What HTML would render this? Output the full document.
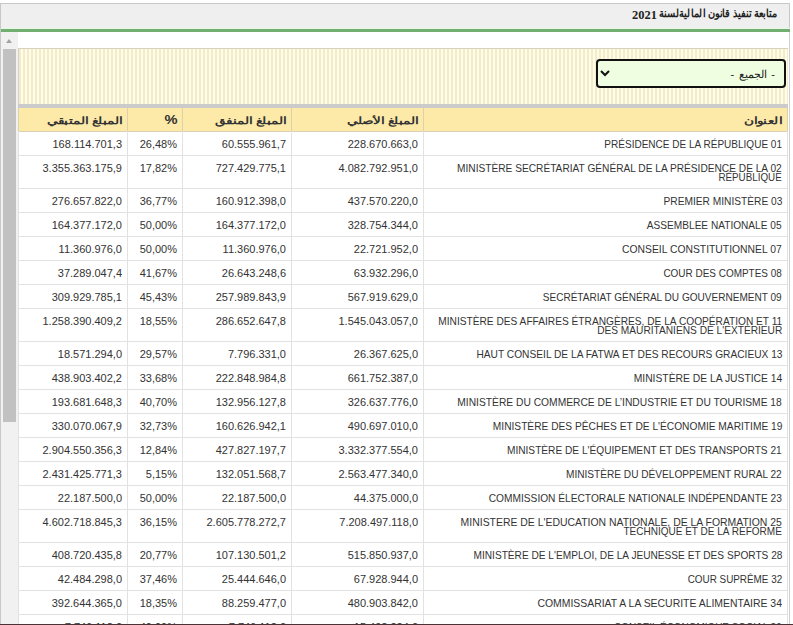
<!DOCTYPE html><html><head><meta charset="utf-8"><style>
*{margin:0;padding:0;box-sizing:border-box}
html,body{width:793px;height:625px;overflow:hidden;background:#fff}
body{position:relative;font-family:"Liberation Sans",sans-serif;color:#333;font-size:11px}
.a{position:absolute}
#frame{left:0;top:3px;width:790px;height:622px;border:1px solid #c8c8c8;border-bottom:none}
#title{left:1px;top:4px;width:788px;height:25px;background:#efefef}
#green{left:1px;top:29px;width:789px;height:3px;background:#72ad72;box-shadow:0 -1px 0 #e4f9e2}
#ttext{right:16px;top:8px;font-weight:bold;font-size:12px;color:#222;direction:rtl;white-space:nowrap;line-height:12px}
#ttext .ar{display:inline-block;transform:scale(0.80,0.9);transform-origin:100% 40%}
#tyear{left:632px;top:7px;font-family:"Liberation Serif",serif;font-weight:bold;font-size:13.5px;line-height:15px;color:#222;transform:scaleX(0.92);transform-origin:0 50%}
.nm{position:absolute;right:5px;top:0;display:block;text-align:right}
.ln{transform-origin:100% 50%;white-space:nowrap}
.hs{display:inline-block;transform:translateY(1.5px) scale(1.09,0.8);transform-origin:100% 60%}
.hp{display:inline-block;transform:translate(0.8px,1px) scale(1.22,1);transform-origin:100% 60%}
#track{left:1px;top:32px;width:17px;height:593px;background:#f1f1f1}
#thumb{left:3px;top:49px;width:13px;height:373px;background:#c1c1c1}
#arrow{left:6px;top:39px;width:0;height:0;border-left:3.5px solid transparent;border-right:3.5px solid transparent;border-bottom:4px solid #a3a3a3}
#panel{left:18px;top:48px;width:770px;height:56px;border:1px solid #d6d0bd;border-right:none;border-bottom:none;
 background:repeating-linear-gradient(90deg,#f2ebcf 0,#f2ebcf 2px,#fffee2 2px,#fffee2 4px)}
#sel{left:596px;top:59px;width:190px;height:29px;border:2px solid #111;border-radius:4px;background:#effde0}
#seltext{right:9px;top:7px;font-size:11px;word-spacing:1.5px;color:#222;direction:rtl;white-space:nowrap;line-height:12px}
#gray{left:18px;top:104px;width:770px;height:4px;background:#cbcbcb}
#hdr{left:18px;top:108px;width:770px;height:24px;background:#fdeaa9;border-bottom:1px solid #d9d0b5}
.h{position:absolute;top:108px;height:23px;font-weight:bold;color:#333;text-align:right;padding-right:5px;line-height:23px;direction:rtl;font-size:12px}
.vl{position:absolute;width:1px;background:#e2e2e2}
.vh{position:absolute;width:1px;background:#dcd2a8}
.hl{position:absolute;left:18px;width:770px;height:1px;background:#e2e2e2}
.c{position:absolute;text-align:right;padding-right:5px;line-height:9px;white-space:nowrap}
#rline{left:789px;top:32px;width:1px;height:593px;background:#d0d0d0}
#bottom{left:0;top:624px;width:793px;height:1px;background:#4a3236}
</style></head><body>
<div class="a" id="frame"></div>
<div class="a" id="title"></div><div class="a" id="green"></div>
<div class="a" id="ttext"><span class="ar">متابعة تنفيذ قانون الماليةلسنة</span></div><div class="a" id="tyear">2021</div>
<div class="a" id="track"></div><div class="a" id="arrow"></div><div class="a" id="thumb"></div>
<div class="a" id="rline"></div>
<div class="a" id="panel"></div>
<div class="a" id="sel"><svg class="a" style="left:2px;top:9px" width="10" height="7" viewBox="0 0 10 7"><path d="M1 1 L5 5 L9 1" fill="none" stroke="#111" stroke-width="2"/></svg><div class="a" id="seltext">- الجميع -</div></div>
<div class="a" id="gray"></div>
<div class="a" id="hdr"></div>
<div class="h" style="left:19px;width:108px"><span class="hs">المبلغ المتبقي</span></div>
<div class="h" style="left:128px;width:54px"><span class="hp">%</span></div>
<div class="h" style="left:183px;width:108px"><span class="hs">المبلغ المنفق</span></div>
<div class="h" style="left:292px;width:131px"><span class="hs">المبلغ الأصلي</span></div>
<div class="h" style="left:424px;width:363px"><span class="hs">العنوان</span></div>
<div class="vh" style="left:18px;top:108px;height:23px"></div>
<div class="vl" style="left:18px;top:131px;height:494px"></div>
<div class="vh" style="left:127px;top:108px;height:23px"></div>
<div class="vl" style="left:127px;top:131px;height:494px"></div>
<div class="vh" style="left:182px;top:108px;height:23px"></div>
<div class="vl" style="left:182px;top:131px;height:494px"></div>
<div class="vh" style="left:291px;top:108px;height:23px"></div>
<div class="vl" style="left:291px;top:131px;height:494px"></div>
<div class="vh" style="left:423px;top:108px;height:23px"></div>
<div class="vl" style="left:423px;top:131px;height:494px"></div>
<div class="vh" style="left:787px;top:108px;height:23px"></div>
<div class="vl" style="left:787px;top:131px;height:494px"></div>
<div class="c" style="left:19px;width:108px;top:140px">168.114.701,3</div>
<div class="c" style="left:128px;width:54px;top:140px">26,48%</div>
<div class="c" style="left:183px;width:108px;top:140px">60.555.961,7</div>
<div class="c" style="left:292px;width:131px;top:140px">228.670.663,0</div>
<div class="c" style="left:424px;width:363px;top:140px"><div class="nm"><div class="ln" style="transform:scaleX(0.911)">PRÉSIDENCE DE LA RÉPUBLIQUE 01</div></div></div>
<div class="hl" style="top:155px"></div>
<div class="c" style="left:19px;width:108px;top:164px">3.355.363.175,9</div>
<div class="c" style="left:128px;width:54px;top:164px">17,82%</div>
<div class="c" style="left:183px;width:108px;top:164px">727.429.775,1</div>
<div class="c" style="left:292px;width:131px;top:164px">4.082.792.951,0</div>
<div class="c" style="left:424px;width:363px;top:164px"><div class="nm"><div class="ln" style="transform:scaleX(0.923)">MINISTÈRE SECRÉTARIAT GÉNÉRAL DE LA PRÉSIDENCE DE LA 02</div><div class="ln" style="transform:scaleX(0.892)">RÉPUBLIQUE</div></div></div>
<div class="hl" style="top:188px"></div>
<div class="c" style="left:19px;width:108px;top:197px">276.657.822,0</div>
<div class="c" style="left:128px;width:54px;top:197px">36,77%</div>
<div class="c" style="left:183px;width:108px;top:197px">160.912.398,0</div>
<div class="c" style="left:292px;width:131px;top:197px">437.570.220,0</div>
<div class="c" style="left:424px;width:363px;top:197px"><div class="nm"><div class="ln" style="transform:scaleX(0.926)">PREMIER MINISTÈRE 03</div></div></div>
<div class="hl" style="top:212px"></div>
<div class="c" style="left:19px;width:108px;top:221px">164.377.172,0</div>
<div class="c" style="left:128px;width:54px;top:221px">50,00%</div>
<div class="c" style="left:183px;width:108px;top:221px">164.377.172,0</div>
<div class="c" style="left:292px;width:131px;top:221px">328.754.344,0</div>
<div class="c" style="left:424px;width:363px;top:221px"><div class="nm"><div class="ln" style="transform:scaleX(0.919)">ASSEMBLEE NATIONALE 05</div></div></div>
<div class="hl" style="top:236px"></div>
<div class="c" style="left:19px;width:108px;top:245px">11.360.976,0</div>
<div class="c" style="left:128px;width:54px;top:245px">50,00%</div>
<div class="c" style="left:183px;width:108px;top:245px">11.360.976,0</div>
<div class="c" style="left:292px;width:131px;top:245px">22.721.952,0</div>
<div class="c" style="left:424px;width:363px;top:245px"><div class="nm"><div class="ln" style="transform:scaleX(0.941)">CONSEIL CONSTITUTIONNEL 07</div></div></div>
<div class="hl" style="top:260px"></div>
<div class="c" style="left:19px;width:108px;top:269px">37.289.047,4</div>
<div class="c" style="left:128px;width:54px;top:269px">41,67%</div>
<div class="c" style="left:183px;width:108px;top:269px">26.643.248,6</div>
<div class="c" style="left:292px;width:131px;top:269px">63.932.296,0</div>
<div class="c" style="left:424px;width:363px;top:269px"><div class="nm"><div class="ln" style="transform:scaleX(0.905)">COUR DES COMPTES 08</div></div></div>
<div class="hl" style="top:284px"></div>
<div class="c" style="left:19px;width:108px;top:293px">309.929.785,1</div>
<div class="c" style="left:128px;width:54px;top:293px">45,43%</div>
<div class="c" style="left:183px;width:108px;top:293px">257.989.843,9</div>
<div class="c" style="left:292px;width:131px;top:293px">567.919.629,0</div>
<div class="c" style="left:424px;width:363px;top:293px"><div class="nm"><div class="ln" style="transform:scaleX(0.913)">SECRÉTARIAT GÉNÉRAL DU GOUVERNEMENT 09</div></div></div>
<div class="hl" style="top:308px"></div>
<div class="c" style="left:19px;width:108px;top:317px">1.258.390.409,2</div>
<div class="c" style="left:128px;width:54px;top:317px">18,55%</div>
<div class="c" style="left:183px;width:108px;top:317px">286.652.647,8</div>
<div class="c" style="left:292px;width:131px;top:317px">1.545.043.057,0</div>
<div class="c" style="left:424px;width:363px;top:317px"><div class="nm"><div class="ln" style="transform:scaleX(0.924)">MINISTÈRE DES AFFAIRES ÉTRANGÈRES, DE LA COOPÉRATION ET 11</div><div class="ln" style="transform:scaleX(0.923)">DES MAURITANIENS DE L'EXTÉRIEUR</div></div></div>
<div class="hl" style="top:341px"></div>
<div class="c" style="left:19px;width:108px;top:350px">18.571.294,0</div>
<div class="c" style="left:128px;width:54px;top:350px">29,57%</div>
<div class="c" style="left:183px;width:108px;top:350px">7.796.331,0</div>
<div class="c" style="left:292px;width:131px;top:350px">26.367.625,0</div>
<div class="c" style="left:424px;width:363px;top:350px"><div class="nm"><div class="ln" style="transform:scaleX(0.926)">HAUT CONSEIL DE LA FATWA ET DES RECOURS GRACIEUX 13</div></div></div>
<div class="hl" style="top:365px"></div>
<div class="c" style="left:19px;width:108px;top:374px">438.903.402,2</div>
<div class="c" style="left:128px;width:54px;top:374px">33,68%</div>
<div class="c" style="left:183px;width:108px;top:374px">222.848.984,8</div>
<div class="c" style="left:292px;width:131px;top:374px">661.752.387,0</div>
<div class="c" style="left:424px;width:363px;top:374px"><div class="nm"><div class="ln" style="transform:scaleX(0.939)">MINISTÈRE DE LA JUSTICE 14</div></div></div>
<div class="hl" style="top:389px"></div>
<div class="c" style="left:19px;width:108px;top:398px">193.681.648,3</div>
<div class="c" style="left:128px;width:54px;top:398px">40,70%</div>
<div class="c" style="left:183px;width:108px;top:398px">132.956.127,8</div>
<div class="c" style="left:292px;width:131px;top:398px">326.637.776,0</div>
<div class="c" style="left:424px;width:363px;top:398px"><div class="nm"><div class="ln" style="transform:scaleX(0.933)">MINISTÈRE DU COMMERCE DE L’INDUSTRIE ET DU TOURISME 18</div></div></div>
<div class="hl" style="top:413px"></div>
<div class="c" style="left:19px;width:108px;top:422px">330.070.067,9</div>
<div class="c" style="left:128px;width:54px;top:422px">32,73%</div>
<div class="c" style="left:183px;width:108px;top:422px">160.626.942,1</div>
<div class="c" style="left:292px;width:131px;top:422px">490.697.010,0</div>
<div class="c" style="left:424px;width:363px;top:422px"><div class="nm"><div class="ln" style="transform:scaleX(0.927)">MINISTÈRE DES PÊCHES ET DE L'ÉCONOMIE MARITIME 19</div></div></div>
<div class="hl" style="top:437px"></div>
<div class="c" style="left:19px;width:108px;top:446px">2.904.550.356,3</div>
<div class="c" style="left:128px;width:54px;top:446px">12,84%</div>
<div class="c" style="left:183px;width:108px;top:446px">427.827.197,7</div>
<div class="c" style="left:292px;width:131px;top:446px">3.332.377.554,0</div>
<div class="c" style="left:424px;width:363px;top:446px"><div class="nm"><div class="ln" style="transform:scaleX(0.923)">MINISTÈRE DE L'ÉQUIPEMENT ET DES TRANSPORTS 21</div></div></div>
<div class="hl" style="top:461px"></div>
<div class="c" style="left:19px;width:108px;top:470px">2.431.425.771,3</div>
<div class="c" style="left:128px;width:54px;top:470px">5,15%</div>
<div class="c" style="left:183px;width:108px;top:470px">132.051.568,7</div>
<div class="c" style="left:292px;width:131px;top:470px">2.563.477.340,0</div>
<div class="c" style="left:424px;width:363px;top:470px"><div class="nm"><div class="ln" style="transform:scaleX(0.919)">MINISTÈRE DU DÉVELOPPEMENT RURAL 22</div></div></div>
<div class="hl" style="top:485px"></div>
<div class="c" style="left:19px;width:108px;top:494px">22.187.500,0</div>
<div class="c" style="left:128px;width:54px;top:494px">50,00%</div>
<div class="c" style="left:183px;width:108px;top:494px">22.187.500,0</div>
<div class="c" style="left:292px;width:131px;top:494px">44.375.000,0</div>
<div class="c" style="left:424px;width:363px;top:494px"><div class="nm"><div class="ln" style="transform:scaleX(0.925)">COMMISSION ÉLECTORALE NATIONALE INDÉPENDANTE 23</div></div></div>
<div class="hl" style="top:509px"></div>
<div class="c" style="left:19px;width:108px;top:518px">4.602.718.845,3</div>
<div class="c" style="left:128px;width:54px;top:518px">36,15%</div>
<div class="c" style="left:183px;width:108px;top:518px">2.605.778.272,7</div>
<div class="c" style="left:292px;width:131px;top:518px">7.208.497.118,0</div>
<div class="c" style="left:424px;width:363px;top:518px"><div class="nm"><div class="ln" style="transform:scaleX(0.948)">MINISTERE DE L'EDUCATION NATIONALE, DE LA FORMATION 25</div><div class="ln" style="transform:scaleX(0.911)">TECHNIQUE ET DE LA REFORME</div></div></div>
<div class="hl" style="top:542px"></div>
<div class="c" style="left:19px;width:108px;top:551px">408.720.435,8</div>
<div class="c" style="left:128px;width:54px;top:551px">20,77%</div>
<div class="c" style="left:183px;width:108px;top:551px">107.130.501,2</div>
<div class="c" style="left:292px;width:131px;top:551px">515.850.937,0</div>
<div class="c" style="left:424px;width:363px;top:551px"><div class="nm"><div class="ln" style="transform:scaleX(0.921)">MINISTÈRE DE L'EMPLOI, DE LA JEUNESSE ET DES SPORTS 28</div></div></div>
<div class="hl" style="top:566px"></div>
<div class="c" style="left:19px;width:108px;top:575px">42.484.298,0</div>
<div class="c" style="left:128px;width:54px;top:575px">37,46%</div>
<div class="c" style="left:183px;width:108px;top:575px">25.444.646,0</div>
<div class="c" style="left:292px;width:131px;top:575px">67.928.944,0</div>
<div class="c" style="left:424px;width:363px;top:575px"><div class="nm"><div class="ln" style="transform:scaleX(0.898)">COUR SUPRÊME 32</div></div></div>
<div class="hl" style="top:590px"></div>
<div class="c" style="left:19px;width:108px;top:599px">392.644.365,0</div>
<div class="c" style="left:128px;width:54px;top:599px">18,35%</div>
<div class="c" style="left:183px;width:108px;top:599px">88.259.477,0</div>
<div class="c" style="left:292px;width:131px;top:599px">480.903.842,0</div>
<div class="c" style="left:424px;width:363px;top:599px"><div class="nm"><div class="ln" style="transform:scaleX(0.948)">COMMISSARIAT A LA SECURITE ALIMENTAIRE 34</div></div></div>
<div class="hl" style="top:614px"></div>
<div class="c" style="left:19px;width:108px;top:623px">7.746.112,0</div>
<div class="c" style="left:128px;width:54px;top:623px">49,99%</div>
<div class="c" style="left:183px;width:108px;top:623px">7.746.112,0</div>
<div class="c" style="left:292px;width:131px;top:623px">15.492.224,0</div>
<div class="c" style="left:424px;width:363px;top:623px"><div class="nm"><div class="ln" style="transform:scaleX(0.903)">CONSEIL ÉCONOMIQUE SOCIAL 36</div></div></div>
<div class="hl" style="top:638px"></div>
<div class="a" id="bottom"></div>
</body></html>
